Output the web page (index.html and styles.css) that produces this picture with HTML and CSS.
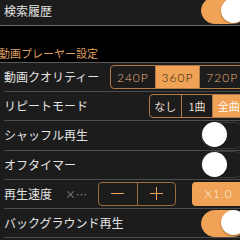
FILE: index.html
```html
<!DOCTYPE html>
<html lang="ja">
<head>
<meta charset="utf-8">
<link rel="stylesheet" href="styles.css">
</head>
<body>
<div class="screen">
  <div class="group first">
    <div class="row tall">
      <span class="label">検索履歴</span>
      <div class="switch on"><span class="knob"></span></div>
    </div>
  </div>
  <div class="section-header">動画プレーヤー設定</div>
  <div class="group open">
    <div class="row">
      <span class="label">動画クオリティー</span>
      <div class="seg quality">
        <span class="seg-item">240P</span>
        <span class="seg-item sel">360P</span>
        <span class="seg-item">720P</span>
      </div>
    </div>
    <div class="row">
      <span class="label">リピートモード</span>
      <div class="seg repeat">
        <span class="seg-item jp">なし</span>
        <span class="seg-item jp">1曲</span>
        <span class="seg-item jp sel light">全曲</span>
      </div>
    </div>
    <div class="row">
      <span class="label">シャッフル再生</span>
      <div class="switch"><span class="knob"></span></div>
    </div>
    <div class="row">
      <span class="label">オフタイマー</span>
      <div class="switch"><span class="knob"></span></div>
    </div>
    <div class="row">
      <span class="label">再生速度</span>
      <span class="speed">×…</span>
      <div class="stepper">
        <span class="step-btn"><span class="minus"></span></span>
        <span class="step-btn"><span class="plus"></span></span>
      </div>
      <span class="speed-btn">X1.0</span>
    </div>
    <div class="row">
      <span class="label">バックグラウンド再生</span>
      <div class="switch on"><span class="knob"></span></div>
    </div>
  </div>
</div>
</body>
</html>
```
FILE: styles.css
```css
html, body {
  margin: 0;
  padding: 0;
  background: #000;
  width: 240px;
  height: 240px;
  overflow: hidden;
}
.screen {
  margin-top: -4px;
  font-family: "Noto Sans CJK JP", "Noto Sans", sans-serif;
}
.group {
  background: #1c1c1c;
  border-top: 1px solid #5a5a5a;
  border-bottom: 1px solid #6a6a6a;
}
.group.first {
  border-top: none;
}
.group.open {
  border-bottom: none;
  padding-bottom: 12px;
}
.row {
  display: flex;
  align-items: center;
  height: 28.2px;
  margin-left: 4px;
  margin-right: -5px;
  border-bottom: 1px solid #4c4c4c;
}
.row.tall {
  height: 29px;
}
.group.first .row {
  border-bottom: none;
}
.label {
  color: #e4e4e4;
  font-size: 12px;
  line-height: 14px;
  white-space: nowrap;
}
.section-header {
  height: 36px;
  display: flex;
  align-items: flex-end;
  padding-bottom: 3px;
  box-sizing: border-box;
  color: #dc9f62;
  font-size: 11px;
  line-height: 12px;
  margin-left: -1px;
}
.switch {
  margin-left: auto;
  margin-right: -2px;
  width: 46px;
  height: 27px;
  border-radius: 14px;
  box-sizing: border-box;
  border: 1.5px solid #3a3a3a;
  position: relative;
  flex: none;
}
.switch.on {
  background: #f0a256;
  border-color: #f0a256;
}
.knob {
  position: absolute;
  top: -0.5px;
  left: 0;
  width: 25px;
  height: 25px;
  border-radius: 50%;
  background: #fff;
  box-shadow: 0 1px 2px rgba(0,0,0,0.35);
}
.switch.on .knob {
  left: auto;
  right: 0;
}
.seg {
  margin-left: auto;
  display: flex;
  height: 24px;
  box-sizing: border-box;
  border: 1px solid #b07a48;
  border-radius: 4px;
  overflow: hidden;
  flex: none;
}
.seg.quality { width: 135px; }
.seg.repeat { width: 96px; }
.seg-item {
  flex: 1;
  display: flex;
  align-items: center;
  justify-content: center;
  color: #eab47e;
  font-family: "Lato", "DejaVu Sans", sans-serif;
  font-weight: 300;
  font-size: 12px;
  letter-spacing: 1px;
}
.seg-item + .seg-item {
  border-left: 1px solid #b07a48;
}
.seg-item.jp {
  font-family: "Noto Sans CJK JP", sans-serif;
  font-weight: 400;
  letter-spacing: 0;
  font-size: 11px;
  color: #e8dccc;
}
.seg-item.sel {
  background: #f0a256;
  color: #2a1a0c;
}
.seg-item.sel.light {
  color: #fff8ef;
}
.speed {
  color: #8a8a8a;
  font-size: 11px;
  margin-left: 13px;
}
.stepper {
  margin-left: auto;
  width: 78px;
  height: 24px;
  display: flex;
  box-sizing: border-box;
  border: 1px solid #9a6c42;
  border-radius: 4px;
  flex: none;
}
.step-btn {
  flex: 1;
  display: flex;
  align-items: center;
  justify-content: center;
  position: relative;
}
.step-btn + .step-btn {
  border-left: 1px solid #9a6c42;
}
.minus, .plus {
  position: relative;
  width: 13px;
  height: 13px;
}
.minus::before, .plus::before, .plus::after {
  content: "";
  position: absolute;
  background: #f0a256;
}
.minus::before, .plus::before {
  left: 0;
  top: 6px;
  width: 13px;
  height: 1px;
}
.plus::after {
  left: 6px;
  top: 0;
  width: 1px;
  height: 13px;
}
.speed-btn {
  margin-left: 16px;
  width: 53px;
  height: 24px;
  border-radius: 4px;
  background: #f0a256;
  color: #fdf1e4;
  display: flex;
  align-items: center;
  justify-content: center;
  font-family: "Lato", "DejaVu Sans", sans-serif;
  font-weight: 300;
  font-size: 12px;
  letter-spacing: 1px;
  flex: none;
}
```
